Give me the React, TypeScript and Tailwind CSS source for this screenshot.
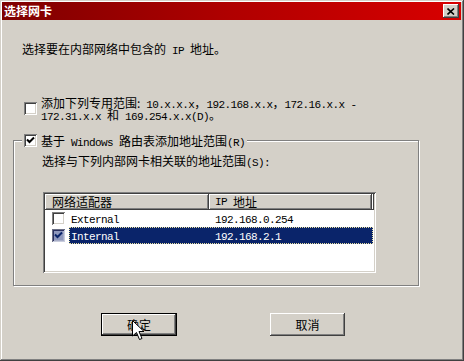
const Check = ({ color = '#000' }: { color?: string }) => (
  <svg width="9" height="9" viewBox="0 0 9 9" className="block">
    <path d="M1 3.5 L3.5 6 L8 1.5" fill="none" stroke={color} strokeWidth="2" />
  </svg>
);

const Box = ({ checked = false, selected = false }: { checked?: boolean; selected?: boolean }) => (
  <div
    className={
      selected
        ? 'w-[13px] h-[13px] shrink-0 bg-[#8f98bd] flex items-center justify-center shadow-[inset_1px_1px_0_#6b6f85,inset_-1px_-1px_0_#c8ccdc,inset_2px_2px_0_#2a3060,inset_-2px_-2px_0_#a8aec8]'
        : 'w-[13px] h-[13px] shrink-0 bg-white flex items-center justify-center shadow-[inset_1px_1px_0_#808080,inset_-1px_-1px_0_#ffffff,inset_2px_2px_0_#404040,inset_-2px_-2px_0_#d4d0c8]'
    }
  >
    {checked && <Check color={selected ? '#0a246a' : '#000'} />}
  </div>
);

// ASCII in the original is a half-width bitmap face, ~6px per char
const L = ({ children }: { children: React.ReactNode }) => (
  <span className="font-['Liberation_Mono',monospace] text-[11px] leading-[12px] tracking-[-0.6px] whitespace-pre">
    {children}
  </span>
);

export default function App() {
  return (
    <div className="w-[464px] h-[361px] bg-[#d4d0c8] relative flex flex-col p-[2px] pr-[3px] font-['Noto_Sans_CJK_SC',sans-serif] text-[12px] leading-[12px] text-black shadow-[inset_-1px_-1px_0_#404040,inset_1px_1px_0_#d4d0c8,inset_-2px_-2px_0_#808080,inset_2px_2px_0_#ffffff]">
      {/* title bar */}
      <div className="h-[18px] shrink-0 flex items-center justify-between pl-[2px] pr-[2px] bg-gradient-to-r from-[#7e0000] via-[#b00000] to-[#d80000]">
        <span className="text-white font-bold text-[12px] leading-[12px]">选择网卡</span>
        <div className="w-[16px] h-[14px] bg-[#d4d0c8] flex items-center justify-center shadow-[inset_-1px_-1px_0_#404040,inset_1px_1px_0_#ffffff,inset_-2px_-2px_0_#808080]">
          <svg width="8" height="7" viewBox="0 0 8 7" className="block">
            <path d="M0.5 0.5 L7 6.5 M7 0.5 L0.5 6.5" stroke="#000" strokeWidth="1.6" />
          </svg>
        </div>
      </div>

      <div className="flex flex-col">
        <div className="mt-[23px] ml-[20px] h-[12px]">
          选择要在内部网络中包含的<L> IP </L>地址。
        </div>

        <div className="mt-[42px] ml-[22px] h-[23px] flex items-center gap-[4px]">
          <Box />
          <div className="flex flex-col">
            <div className="h-[12px]">
              添加下列专用范围:<L> 10.x.x.x</L>，<L>192.168.x.x</L>，<L>172.16.x.x -</L>
            </div>
            <div className="h-[11px]">
              <L>172.31.x.x </L>和<L> 169.254.x.x(D)</L>。
            </div>
          </div>
        </div>

        {/* group box */}
        <div className="relative mt-[20px] ml-[11px] w-[406px] h-[146px] border border-[#808080] shadow-[1px_1px_0_#ffffff,inset_1px_1px_0_#ffffff] pt-[14px] pl-[28px]">
          <div className="absolute -top-[7px] left-[8px] px-[2px] h-[13px] bg-[#d4d0c8] flex items-center gap-[4px]">
            <Box checked />
            <span className="h-[12px]">
              基于<L> Windows </L>路由表添加地址范围<L>(R)</L>
            </span>
          </div>

          <div className="h-[12px]">
            选择与下列内部网卡相关联的地址范围<L>(S):</L>
          </div>

          {/* list view */}
          <div className="mt-[25px] ml-[1px] w-[333px] h-[81px] bg-white p-[2px] shadow-[inset_1px_1px_0_#808080,inset_-1px_-1px_0_#ffffff,inset_2px_2px_0_#404040,inset_-2px_-2px_0_#d4d0c8]">
            <div className="h-[16px] flex">
              <div className="w-[164px] bg-[#d4d0c8] flex items-center pl-[7px] shadow-[inset_-1px_-1px_0_#404040,inset_1px_1px_0_#ffffff,inset_-2px_-2px_0_#808080]">
                网络适配器
              </div>
              <div className="w-[163px] bg-[#d4d0c8] flex items-center pl-[6px] shadow-[inset_-1px_-1px_0_#404040,inset_1px_1px_0_#ffffff,inset_-2px_-2px_0_#808080]">
                <L>IP </L>地址
              </div>
              <div className="flex-1 bg-[#d4d0c8] shadow-[inset_-1px_-1px_0_#404040,inset_1px_1px_0_#ffffff]" />
            </div>

            <div className="h-[17px] flex items-center">
              <div className="pl-[7px] w-[24px]">
                <Box />
              </div>
              <div className="w-[140px] pl-[2px]">
                <L>External</L>
              </div>
              <div className="pl-[6px]">
                <L>192.168.0.254</L>
              </div>
            </div>

            <div className="h-[17px] flex items-center">
              <div className="pl-[7px] w-[24px]">
                <Box checked selected />
              </div>
              <div className="w-[304px] h-[17px] flex items-center bg-[#0a246a] text-white outline outline-1 outline-dotted outline-[#e8e0a0] -outline-offset-1">
                <div className="w-[140px] pl-[2px]">
                  <L>Internal</L>
                </div>
                <div className="pl-[6px]">
                  <L>192.168.2.1</L>
                </div>
              </div>
            </div>
          </div>
        </div>

        {/* buttons */}
        <div className="mt-[27px] ml-[99px] flex gap-[93px]">
          <button className="w-[76px] h-[23px] bg-[#d4d0c8] border border-black flex items-center justify-center shadow-[inset_-1px_-1px_0_#404040,inset_1px_1px_0_#ffffff,inset_-2px_-2px_0_#808080]">
            确定
          </button>
          <button className="w-[75px] h-[23px] bg-[#d4d0c8] flex items-center justify-center shadow-[inset_-1px_-1px_0_#404040,inset_1px_1px_0_#ffffff,inset_-2px_-2px_0_#808080,inset_2px_2px_0_#d4d0c8]">
            取消
          </button>
        </div>
      </div>

      {/* mouse pointer */}
      <svg width="13" height="21" viewBox="0 0 13 21" className="absolute left-[132px] top-[320px]">
        <path d="M0.5 0.5 L0.5 16 L4.5 12.5 L7.5 19.5 L10 18.5 L7 11.5 L12 11.5 Z" fill="#fff" stroke="#000" strokeWidth="1" />
      </svg>
    </div>
  );
}
